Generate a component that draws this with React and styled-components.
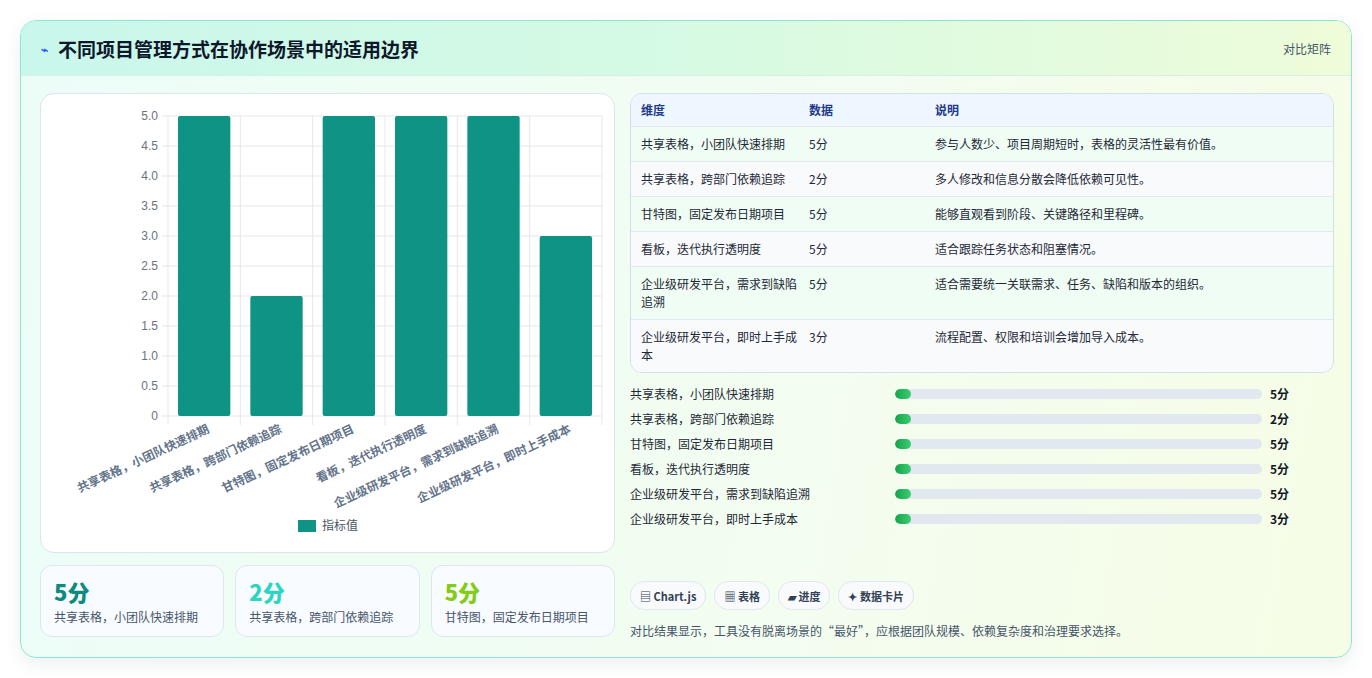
import React from "react";
import styled, { createGlobalStyle } from "styled-components";

const Global = createGlobalStyle`
  body { margin: 0; background: #fff; font-family: "Noto Sans CJK SC", "Noto Sans", sans-serif; }
`;
const Page = styled.div`padding: 20px 20px 20px 20px;`;
const Card = styled.div`
  border: 1px solid #8ee6d6; border-radius: 16px; overflow: hidden;
  background: linear-gradient(100deg, #ecfdf8 0%, #f3fdf0 60%, #f6fde6 100%);
  box-shadow: 0 6px 18px rgba(15, 80, 70, 0.08);
`;
const Header = styled.div`
  height: 54px; display: flex; align-items: center; justify-content: space-between;
  padding: 0 20px; border-bottom: 1px solid #d6efe8;
  background: linear-gradient(90deg, #c9f7ec 0%, #d6fae3 50%, #eefcd9 100%);
`;
const Title = styled.h1`
  margin: 0; font-size: 19px; font-weight: 700; color: #0f172a; display: flex; align-items: center; gap: 10px;
`;
const Tag = styled.span`font-size: 12px; color: #475569;`;
const Body = styled.div`
  display: grid; grid-template-columns: 575px 704px; gap: 15px; padding: 17px 19px 18px 19px;
`;
const Col = styled.div`display: flex; flex-direction: column;`;
const ChartBox = styled.div`
  height: 460px; background: #fff; border: 1px solid #dbe5ec; border-radius: 14px; box-sizing: border-box;
`;
const Stats = styled.div`display: grid; grid-template-columns: repeat(3, 1fr); gap: 11px; margin-top: 12px;`;
const Stat = styled.div`
  height: 72px; box-sizing: border-box; border: 1px solid #dbe7ef; border-radius: 12px; background: #f8fbff;
  padding: 10px 13px;
`;
const StatVal = styled.div`font-size: 22px; font-weight: 800; color: ${p => p.c}; line-height: 30px;`;
const StatLbl = styled.div`font-size: 12px; color: #475569; margin-top: 2px;`;
const Table = styled.div`
  border: 1px solid #d4dee8; border-radius: 12px; overflow: hidden; background: #fff;
`;
const Row = styled.div`
  display: grid; grid-template-columns: 168px 126px 1fr; padding: 8px 10px 8px 10px;
  font-size: 12px; line-height: 18px; color: #1f2937;
  background: ${p => p.head ? "#eef6ff" : p.alt ? "#f8fafc" : "#f0fdf4"};
  border-top: ${p => p.head ? "none" : "1px solid #e2e8f0"};
  ${p => p.head && "color:#1e3a8a; font-weight:600; padding: 7px 10px;"}
  ${p => !p.head && "min-height: 18px;"}
`;
const Cell = styled.div`padding-right: 10px;`;
const Bars = styled.div`display: flex; flex-direction: column; gap: 8px; margin-top: 12px;`;
const BarRow = styled.div`display: grid; grid-template-columns: 265px 367px 1fr; align-items: center; height: 17px; font-size: 12px; color: #1f2937;`;
const Track = styled.div`height: 10px; border-radius: 5px; background: #e2e8f0; overflow: hidden;`;
const Fill = styled.div`height: 100%; border-radius: 5px; background: linear-gradient(90deg, #16a34a, #4ade80 140%); width: 16px;`;
const BarVal = styled.div`font-weight: 700; color: #111827; padding-left: 8px;`;
const Chips = styled.div`display: flex; gap: 8px; margin-top: 54px;`;
const Chip = styled.span`
  height: 27px; padding: 0 9px; display: inline-flex; align-items: center; gap: 4px; border-radius: 14px;
  background: #f8fafc; border: 1px solid #e2e8f0; font-size: 11px; font-weight: 700; color: #334155;
`;
const Foot = styled.div`font-size: 12px; color: #475569; margin-top: 12px;`;

const cats = ["共享表格，小团队快速排期","共享表格，跨部门依赖追踪","甘特图，固定发布日期项目","看板，迭代执行透明度","企业级研发平台，需求到缺陷追溯","企业级研发平台，即时上手成本"];
const vals = [5,2,5,5,5,3];

function Chart() {
  const x0 = 127, x1 = 561, y0 = 22, y1 = 322;
  const cw = (x1 - x0) / 6;
  const ticks = [0,0.5,1,1.5,2,2.5,3,3.5,4,4.5,5];
  return (
    <svg width="573" height="458">
      {ticks.map(t => { const y = y1 - t * 60; return (
        <g key={t}>
          <line x1={x0 - 6} x2={x1} y1={y} y2={y} stroke="#e5e7eb" />
          <text x={x0 - 10} y={y + 4} textAnchor="end" fontSize="12" fill="#6b7280" fontFamily="Liberation Sans, sans-serif">{t === 0 ? "0" : t.toFixed(1)}</text>
        </g>);})}
      {[0,1,2,3,4,5,6].map(i => <line key={i} x1={x0 + i*cw} x2={x0 + i*cw} y1={y0} y2={y1 + 9} stroke="#e5e7eb" />)}
      {vals.map((v,i) => <rect key={i} x={x0 + i*cw + 10} y={y1 - v*60} width={cw - 20} height={v*60} rx="2" fill="#0f9384" />)}
      {cats.map((c,i) => (
        <text key={c} transform={`translate(${x0 + i*cw + cw/2 + 6}, ${y1 + 16}) rotate(-25)`} textAnchor="end" fontSize="12" fontWeight="600" fill="#64748b">{c}</text>
      ))}
      <rect x="257" y="426" width="18" height="12" fill="#0f9384" />
      <text x="281" y="436" fontSize="12" fill="#4b5563">指标值</text>
    </svg>
  );
}

const rows = [
  ["共享表格，小团队快速排期","5分","参与人数少、项目周期短时，表格的灵活性最有价值。"],
  ["共享表格，跨部门依赖追踪","2分","多人修改和信息分散会降低依赖可见性。"],
  ["甘特图，固定发布日期项目","5分","能够直观看到阶段、关键路径和里程碑。"],
  ["看板，迭代执行透明度","5分","适合跟踪任务状态和阻塞情况。"],
  ["企业级研发平台，需求到缺陷追溯","5分","适合需要统一关联需求、任务、缺陷和版本的组织。"],
  ["企业级研发平台，即时上手成本","3分","流程配置、权限和培训会增加导入成本。"],
];

export default function App() {
  return (
    <Page>
      <Global />
      <Card>
        <Header>
          <Title><span style={{ color: "#2563eb", fontSize: 12 }}>⌁</span>不同项目管理方式在协作场景中的适用边界</Title>
          <Tag>对比矩阵</Tag>
        </Header>
        <Body>
          <Col>
            <ChartBox><Chart /></ChartBox>
            <Stats>
              <Stat><StatVal c="#0f8a7e">5分</StatVal><StatLbl>共享表格，小团队快速排期</StatLbl></Stat>
              <Stat><StatVal c="#2dd4bf">2分</StatVal><StatLbl>共享表格，跨部门依赖追踪</StatLbl></Stat>
              <Stat><StatVal c="#84cc16">5分</StatVal><StatLbl>甘特图，固定发布日期项目</StatLbl></Stat>
            </Stats>
          </Col>
          <Col>
            <Table>
              <Row head><Cell>维度</Cell><Cell>数据</Cell><Cell>说明</Cell></Row>
              {rows.map((r,i) => <Row key={i} alt={i % 2 === 1}><Cell>{r[0]}</Cell><Cell>{r[1]}</Cell><Cell>{r[2]}</Cell></Row>)}
            </Table>
            <Bars>
              {rows.map((r,i) => <BarRow key={i}><span>{r[0]}</span><Track><Fill /></Track><BarVal>{r[1]}</BarVal></BarRow>)}
            </Bars>
            <Chips>
              <Chip>▤ Chart.js</Chip><Chip>▦ 表格</Chip><Chip>▰ 进度</Chip><Chip>✦ 数据卡片</Chip>
            </Chips>
            <Foot>对比结果显示，工具没有脱离场景的“最好”，应根据团队规模、依赖复杂度和治理要求选择。</Foot>
          </Col>
        </Body>
      </Card>
    </Page>
  );
}
